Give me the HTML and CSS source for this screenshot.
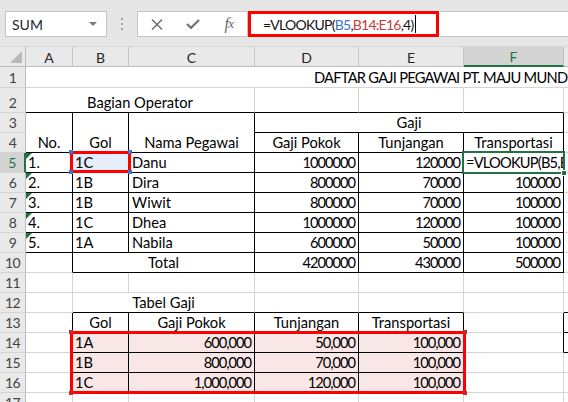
FILE: index.html
```html
<!DOCTYPE html>
<html>
<head>
<meta charset="utf-8">
<link rel="stylesheet" href="styles.css">
</head>
<body>
<div class="toolbar">
  <div class="namebox">
    <span class="nb-text">SUM</span>
    <svg class="nb-caret" width="8" height="4" viewBox="0 0 8 4"><path d="M0 0H8L4 4Z" fill="#7a7a7a"/></svg>
  </div>
  <div class="grip">
    <svg width="3" height="12" viewBox="0 0 3 12"><rect x="0" y="0" width="2" height="2" fill="#a6a6a6"/><rect x="0" y="5" width="2" height="2" fill="#a6a6a6"/><rect x="0" y="10" width="2" height="2" fill="#a6a6a6"/></svg>
  </div>
  <div class="fbtns">
    <span class="fbtn"><svg width="12" height="11" viewBox="0 0 12 11"><path d="M1 0.5L11 10.5M11 0.5L1 10.5" stroke="#707070" stroke-width="1.5" fill="none"/></svg></span>
    <span class="fbtn"><svg width="14" height="10" viewBox="0 0 14 10"><path d="M1 5L5 8.8L13 1" stroke="#767676" stroke-width="2.4" fill="none"/></svg></span>
    <span class="fbtn fx"><i>f</i><i class="fx-x">x</i></span>
  </div>
  <div class="finput">
    <span class="ftext">=VLOOKUP(<span class="ref-b">B5</span>,<span class="ref-r">B14:E16</span>,4)</span><span class="cursor"></span>
  </div>
  <div class="annot-formula"></div>
</div>

<div class="sheet">
  <div class="corner"></div>
  <div class="ch">A</div><div class="ch">B</div><div class="ch">C</div><div class="ch">D</div><div class="ch">E</div><div class="ch sel">F</div><div class="ch"></div>

  <div class="rh">1</div><div class="c title s7">DAFTAR GAJI PEGAWAI PT. MAJU MUNDUR</div>

  <div class="rh">2</div><div class="c m kb s3">Bagian Operator</div><div class="c kb"></div><div class="c kb"></div><div class="c kb"></div><div class="c"></div>

  <div class="rh">3</div><div class="c m kb kr rs2">No.</div><div class="c m kb kr rs2">Gol</div><div class="c m kb kr rs2">Nama Pegawai</div><div class="c m kb kr s3">Gaji</div><div class="c"></div>
  <div class="rh">4</div><div class="c m kb kr">Gaji Pokok</div><div class="c m kb kr">Tunjangan</div><div class="c m kb kr">Transportasi</div><div class="c"></div>

  <div class="rh rsel">5</div><div class="c kb kr tri">1.</div><div class="c kb kr refcell">1C</div><div class="c kb kr txt">Danu</div><div class="c r kb kr">1000000</div><div class="c r kb kr">120000</div><div class="c kb kr fcell">=VLOOKUP(B5,B14:E16,4)</div><div class="c"></div>
  <div class="rh">6</div><div class="c kb kr tri">2.</div><div class="c kb kr">1B</div><div class="c kb kr txt">Dira</div><div class="c r kb kr">800000</div><div class="c r kb kr">70000</div><div class="c r kb kr">100000</div><div class="c"></div>
  <div class="rh">7</div><div class="c kb kr tri">3.</div><div class="c kb kr">1B</div><div class="c kb kr txt">Wiwit</div><div class="c r kb kr">800000</div><div class="c r kb kr">70000</div><div class="c r kb kr">100000</div><div class="c"></div>
  <div class="rh">8</div><div class="c kb kr tri">4.</div><div class="c kb kr">1C</div><div class="c kb kr txt">Dhea</div><div class="c r kb kr">1000000</div><div class="c r kb kr">120000</div><div class="c r kb kr">100000</div><div class="c"></div>
  <div class="rh">9</div><div class="c kb kr tri">5.</div><div class="c kb kr">1A</div><div class="c kb kr txt">Nabila</div><div class="c r kb kr">600000</div><div class="c r kb kr">50000</div><div class="c r kb kr">100000</div><div class="c"></div>
  <div class="rh">10</div><div class="c kr"></div><div class="c m kb kr s2">Total</div><div class="c r kb kr">4200000</div><div class="c r kb kr">430000</div><div class="c r kb kr">500000</div><div class="c"></div>

  <div class="rh">11</div><div class="c"></div><div class="c"></div><div class="c"></div><div class="c"></div><div class="c"></div><div class="c"></div><div class="c"></div>
  <div class="rh">12</div><div class="c"></div><div class="c m kb s2">Tabel Gaji</div><div class="c kb"></div><div class="c kb"></div><div class="c"></div><div class="c kb"></div>
  <div class="rh">13</div><div class="c kr"></div><div class="c m kb kr">Gol</div><div class="c m kb kr">Gaji Pokok</div><div class="c m kb kr">Tunjangan</div><div class="c m kb kr">Transportasi</div><div class="c kr"></div><div class="c kb"></div>
  <div class="rh">14</div><div class="c kr"></div><div class="c kb kr pk">1A</div><div class="c r kb kr pk">600,000</div><div class="c r kb kr pk">50,000</div><div class="c r kb kr pk">100,000</div><div class="c kr"></div><div class="c kb"></div>
  <div class="rh">15</div><div class="c kr"></div><div class="c kb kr pk">1B</div><div class="c r kb kr pk">800,000</div><div class="c r kb kr pk">70,000</div><div class="c r kb kr pk">100,000</div><div class="c"></div><div class="c"></div>
  <div class="rh">16</div><div class="c kr"></div><div class="c kb kr pk">1C</div><div class="c r kb kr pk">1,000,000</div><div class="c r kb kr pk">120,000</div><div class="c r kb kr pk">100,000</div><div class="c"></div><div class="c"></div>
  <div class="rh">17</div><div class="c"></div><div class="c"></div><div class="c"></div><div class="c"></div><div class="c"></div><div class="c"></div><div class="c"></div>

  <div class="ov-ref"><span class="h h-tl"></span><span class="h h-tr"></span><span class="h h-bl"></span><span class="h h-br"></span></div>
  <div class="ov-active"><span class="fill-handle"></span></div>
  <div class="ov-range"><span class="h h-tl"></span><span class="h h-tr"></span><span class="h h-bl"></span><span class="h h-br"></span></div>
</div>
</body>
</html>
```

FILE: styles.css
```css
* { box-sizing: border-box; margin: 0; padding: 0; }
html, body { width: 568px; height: 402px; overflow: hidden; background: #fff; }
body { font-family: Lato, "Liberation Sans", sans-serif; color: #000; }

/* ---------- formula toolbar ---------- */
.toolbar {
  position: relative;
  height: 47px;
  background: #e6e6e6;
  border-bottom: 1px solid #d6d6d6;
  display: flex;
  align-items: flex-start;
  padding: 11px 0 0 5px;
}
.namebox {
  position: relative;
  width: 102px;
  height: 26px;
  background: #fff;
  border: 1px solid #c6c6c6;
  display: flex;
  align-items: center;
  justify-content: space-between;
  padding: 0 6px 0 6px;
  font-size: 14px;
  color: #262626;
}
.nb-caret { margin-right: 3px; }
.grip {
  width: 30px;
  height: 26px;
  display: flex;
  align-items: center;
  justify-content: center;
  padding-left: 1px;
}
.fbtns {
  width: 111px;
  height: 26px;
  background: #fff;
  border: 1px solid #c6c6c6;
  display: flex;
  align-items: center;
  padding-left: 1px;
}
.fbtn {
  width: 36px;
  display: flex;
  align-items: center;
  justify-content: center;
}
.fx {
  font-family: "Liberation Serif", serif;
  font-size: 16px;
  color: #666;
  letter-spacing: -0.5px;
}
.fx-x { font-size: 13px; }
.finput {
  flex: 1;
  height: 26px;
  margin-left: 1px;
  background: #fff;
  border: 1px solid #c6c6c6;
  border-right: none;
  display: flex;
  align-items: center;
  padding-left: 13px;
  font-size: 14px;
  letter-spacing: -0.75px;
  color: #111;
}
.ref-b { color: #3a75c4; }
.ref-r { color: #c43d3d; }
.cursor {
  display: inline-block;
  width: 1px;
  height: 18px;
  background: #000;
  margin-left: 2px;
}
.annot-formula {
  position: absolute;
  left: 248px;
  top: 11px;
  width: 191px;
  height: 26px;
  border: 3px solid #ff0000;
}

/* ---------- sheet grid ---------- */
.sheet {
  position: relative;
  display: grid;
  grid-template-columns: 26px 47px 56px 126px 104px 105px 100px 1fr;
  grid-template-rows: 20px 21px 25px repeat(15, 20px);
  font-size: 14.67px;
}
.corner {
  position: relative;
  background: #e9e9e9;
  border-right: 1px solid #bdbdbd;
  border-bottom: 1px solid #bdbdbd;
}
.corner::after {
  content: "";
  position: absolute;
  right: 3px;
  bottom: 3px;
  border-left: 12px solid transparent;
  border-bottom: 12px solid #b9b9b9;
}
.ch {
  background: #e9e9e9;
  border-right: 1px solid #c6c6c6;
  border-bottom: 1px solid #bdbdbd;
  display: flex;
  align-items: center;
  justify-content: center;
  font-size: 14px;
  color: #262626;
  padding-top: 1px;
}
.ch.sel {
  background: #d3d3d3;
  color: #217346;
  border-bottom: 2px solid #217346;
  border-right-color: #bdbdbd;
}
.rh {
  background: #e9e9e9;
  border-right: 1px solid #bdbdbd;
  border-bottom: 1px solid #d4d4d4;
  display: flex;
  align-items: flex-end;
  justify-content: center;
  font-size: 14px;
  line-height: 19px;
  color: #444;
  letter-spacing: -0.5px;
}
.rh.rsel {
  background: #d3d3d3;
  color: #217346;
  border-right: 2px solid #217346;
}
.c {
  position: relative;
  min-width: 0;
  overflow: hidden;
  white-space: nowrap;
  border-right: 1px solid #d4d4d4;
  border-bottom: 1px solid #d4d4d4;
  display: flex;
  align-items: flex-end;
  padding: 0 2px 0 2px;
  line-height: 19px;
}
.c.txt { padding-left: 3px; }
.r { justify-content: flex-end; padding-right: 3px; letter-spacing: -1px; }
.m { justify-content: center; }
.kb { border-bottom-color: #000; }
.kr { border-right-color: #000; }
.s2 { grid-column: span 2; }
.s3 { grid-column: span 3; }
.s7 { grid-column: span 7; border-right: none; }
.rs2 { grid-row: span 2; }
.title { padding-left: 288px; letter-spacing: -0.75px; }
.fcell { letter-spacing: -0.8px; }
.pk { background: #f9e7e7; }
.refcell { background: #e6eef9; }
.tri::before {
  content: "";
  position: absolute;
  left: 0;
  top: 0;
  border-top: 6px solid #1e7145;
  border-right: 6px solid transparent;
}

/* ---------- overlays ---------- */
.ov-ref {
  position: absolute;
  grid-column: 3 / 4;
  grid-row: 6 / 7;
  left: -3px;
  top: -2px;
  right: -2px;
  bottom: 0;
  border: 3px solid #ff0000;
}
.ov-ref .h {
  position: absolute;
  width: 4px;
  height: 4px;
  background: #3e74c9;
}
.ov-range {
  position: absolute;
  grid-column: 3 / 7;
  grid-row: 15 / 18;
  left: -3px;
  top: -2px;
  right: -2px;
  bottom: -1px;
  border: 3px solid #ff0000;
}
.ov-range .h {
  position: absolute;
  width: 4px;
  height: 4px;
  background: #c8282d;
}
.h-tl { left: -4px; top: -4px; }
.h-tr { right: -4px; top: -4px; }
.h-bl { left: -4px; bottom: -4px; }
.h-br { right: -4px; bottom: -4px; }
.ov-active {
  position: absolute;
  grid-column: 7 / 8;
  grid-row: 6 / 7;
  left: -2px;
  top: -2px;
  right: -1px;
  bottom: -1px;
  border: 2px solid #217346;
}
.fill-handle {
  position: absolute;
  right: -4px;
  bottom: -4px;
  width: 6px;
  height: 6px;
  background: #217346;
  border: 1px solid #fff;
}
```
